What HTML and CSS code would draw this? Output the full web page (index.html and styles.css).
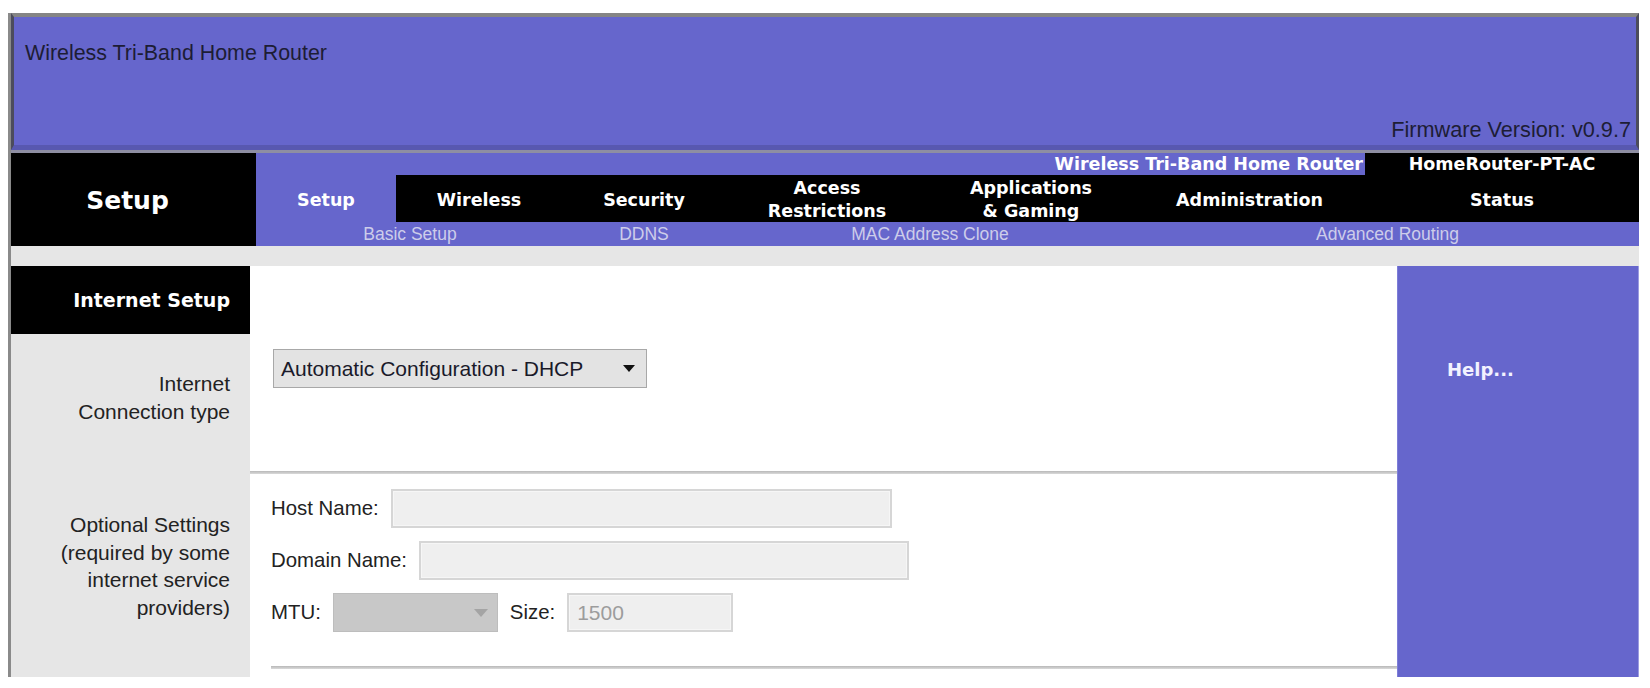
FILE: index.html
```html
<!DOCTYPE html>
<html lang="en">
<head>
<meta charset="utf-8">
<title>Wireless Tri-Band Home Router</title>
<link rel="stylesheet" href="styles.css">
</head>
<body>
<div class="page">
  <header class="banner">
    <div class="banner-title">Wireless Tri-Band Home Router</div>
    <div class="banner-fw">Firmware Version: v0.9.7</div>
  </header>
  <div class="banner-rule"></div>
  <nav class="nav">
    <div class="nav-section"><span>Setup</span></div>
    <div class="nav-main">
      <div class="nav-top">
        <div class="nav-product">Wireless Tri-Band Home Router</div>
        <div class="nav-model">HomeRouter-PT-AC</div>
      </div>
      <div class="nav-tabs">
        <div class="tab tab-active t-setup">Setup</div>
        <div class="tab t-wireless">Wireless</div>
        <div class="tab t-security">Security</div>
        <div class="tab t-access">Access<br>Restrictions</div>
        <div class="tab t-apps">Applications<br>&amp; Gaming</div>
        <div class="tab t-admin">Administration</div>
        <div class="tab t-status">Status</div>
      </div>
      <div class="nav-sub">
        <div class="sub s1">Basic Setup</div>
        <div class="sub s2">DDNS</div>
        <div class="sub s3">MAC Address Clone</div>
        <div class="sub s4">Advanced Routing</div>
      </div>
    </div>
  </nav>
  <div class="gap-strip"></div>
  <main class="main">
    <aside class="labels">
      <div class="labels-head">Internet Setup</div>
      <div class="label label-conn">Internet<br>Connection type</div>
      <div class="label label-opt">Optional Settings<br>(required by some<br>internet service<br>providers)</div>
    </aside>
    <section class="content">
      <div class="conn-area">
        <div class="select select-conn">
          <span>Automatic Configuration - DHCP</span>
          <svg class="arrow" width="12" height="7" viewBox="0 0 12 7"><path d="M0 0 L12 0 L6 7 Z" fill="#111"/></svg>
        </div>
      </div>
      <div class="rule"></div>
      <div class="form">
        <div class="row"><span class="lbl">Host Name:</span><div class="input input-host"></div></div>
        <div class="row"><span class="lbl">Domain Name:</span><div class="input input-domain"></div></div>
        <div class="row">
          <span class="lbl">MTU:</span>
          <div class="select select-mtu">
            <svg class="arrow-mtu" width="14" height="8" viewBox="0 0 14 8"><path d="M0 0 L14 0 L7 8 Z" fill="#a4a4a4"/></svg>
          </div>
          <span class="lbl lbl-size">Size:</span>
          <div class="input input-size">1500</div>
        </div>
      </div>
      <div class="rule rule-indent"></div>
    </section>
    <aside class="help"><span>Help...</span></aside>
  </main>
</div>
</body>
</html>
```

FILE: styles.css
```css
html, body {
  margin: 0;
  padding: 0;
  background: #ffffff;
}

body {
  font-family: "Liberation Sans", Arial, sans-serif;
  color: #222;
}

.page {
  margin: 13px 0 0 8px;
  width: 1628px;
  border-left: 3px solid #8a8a8a;
}

/* Banner */
.banner {
  box-sizing: border-box;
  height: 137px;
  background: #6666cc;
  border-top: 4px solid #858585;
  border-left: 3px solid #4c4c5c;
  border-right: 3px solid #4c4c5c;
  border-bottom: 5px solid #5858b0;
  padding: 24px 5px 3px 11px;
  display: flex;
  flex-direction: column;
  justify-content: space-between;
}

.banner-title {
  font-size: 21.4px;
  line-height: 24px;
  color: #1d1d35;
}

.banner-fw {
  font-size: 21.7px;
  line-height: 24px;
  color: #1d1d35;
  text-align: right;
}

.banner-rule {
  height: 3px;
  background: #8e8ea2;
}

/* Navigation */
.nav {
  display: flex;
  height: 93px;
  font-family: "DejaVu Sans", Verdana, sans-serif;
  font-weight: bold;
  color: #ffffff;
}

.nav-section {
  width: 245px;
  background: #000;
  display: flex;
  align-items: center;
  justify-content: center;
  padding: 2px 12px 0 0;
  box-sizing: border-box;
  font-size: 25px;
}

.nav-main {
  flex: 1;
  display: flex;
  flex-direction: column;
}

.nav-top {
  display: flex;
  height: 22px;
  font-size: 17.5px;
  line-height: 22px;
}

.nav-product {
  flex: 1;
  background: #6666cc;
  text-align: right;
  padding-right: 2px;
}

.nav-model {
  width: 274px;
  background: #000;
  text-align: center;
}

.nav-tabs {
  display: flex;
  height: 47px;
  font-size: 17.5px;
  line-height: 23px;
}

.tab {
  box-sizing: border-box;
  background: #000;
  display: flex;
  align-items: center;
  justify-content: center;
  text-align: center;
  padding-top: 3px;
}

.tab-active { background: #6666cc; }

.t-setup { width: 140px; }
.t-wireless { width: 166px; }
.t-security { width: 164px; }
.t-access { width: 202px; }
.t-apps { width: 206px; }
.t-admin { width: 231px; }
.t-status { width: 274px; }

.nav-sub {
  display: flex;
  height: 24px;
  background: #6666cc;
  font-family: "Liberation Sans", Arial, sans-serif;
  font-weight: normal;
  font-size: 17.5px;
  line-height: 24px;
  color: #cdcdea;
}

.sub { text-align: center; }
.s1 { width: 308px; }
.s2 { width: 160px; }
.s3 { width: 412px; }
.s4 { width: 503px; }

.gap-strip {
  height: 20px;
  background: #e6e6e6;
}

/* Main */
.main {
  display: flex;
  height: 411px;
}

.labels {
  width: 239px;
  background: #e6e6e6;
  display: flex;
  flex-direction: column;
}

.labels-head {
  height: 68px;
  background: #000;
  color: #fff;
  font-family: "DejaVu Sans", Verdana, sans-serif;
  font-weight: bold;
  font-size: 19px;
  display: flex;
  align-items: center;
  justify-content: flex-end;
  padding-right: 20px;
}

.label {
  text-align: right;
  padding-right: 20px;
  font-size: 21px;
  line-height: 27.5px;
  color: #222;
}

.label-conn { margin-top: 36px; }
.label-opt { margin-top: 86px; }

.content {
  flex: 1;
  background: #fff;
  display: flex;
  flex-direction: column;
}

.conn-area {
  box-sizing: border-box;
  height: 205px;
  padding: 83px 0 0 23px;
}

.select {
  box-sizing: border-box;
  height: 39px;
  display: flex;
  align-items: center;
}

.select-conn {
  width: 374px;
  background: #e3e3e3;
  border: 1px solid #a8a8a8;
  padding: 0 11px 0 7px;
  font-size: 21px;
  color: #1a1a2a;
}

.select-conn .arrow { margin-left: auto; }

.rule {
  height: 3px;
  background: linear-gradient(#b8b8b8, #dadada);
}

.rule-indent {
  margin: 34px 0 0 21px;
}

.form {
  padding: 15px 0 0 21px;
  display: flex;
  flex-direction: column;
  gap: 13px;
}

.row {
  display: flex;
  align-items: center;
  height: 39px;
}

.lbl {
  font-size: 20.4px;
  color: #222;
}

.input {
  box-sizing: border-box;
  height: 39px;
  background: #efefef;
  border: 2px solid #d6d6d6;
  box-shadow: inset 0 0 0 1px #f6f6f6;
  margin-left: 12px;
}

.input-host { width: 501px; }
.input-domain { width: 490px; }

.select-mtu {
  width: 165px;
  margin-left: 12px;
  background: #c8c8c8;
  border: 1px solid #bdbdbd;
  padding-right: 9px;
  justify-content: flex-end;
}

.lbl-size { margin-left: 12px; }

.input-size {
  width: 166px;
  margin-left: 12px;
  padding-left: 8px;
  font-size: 21px;
  line-height: 35px;
  color: #9c9c9c;
}

.help {
  width: 242px;
  box-sizing: border-box;
  background: #6666cc;
  border-left: 1px solid #7e7ed8;
  border-right: 1px solid #9c9ce0;
  padding: 92px 0 0 49px;
  font-family: "DejaVu Sans", Verdana, sans-serif;
  font-weight: bold;
  font-size: 18px;
  line-height: 24px;
  color: #f2f2ff;
}
```
